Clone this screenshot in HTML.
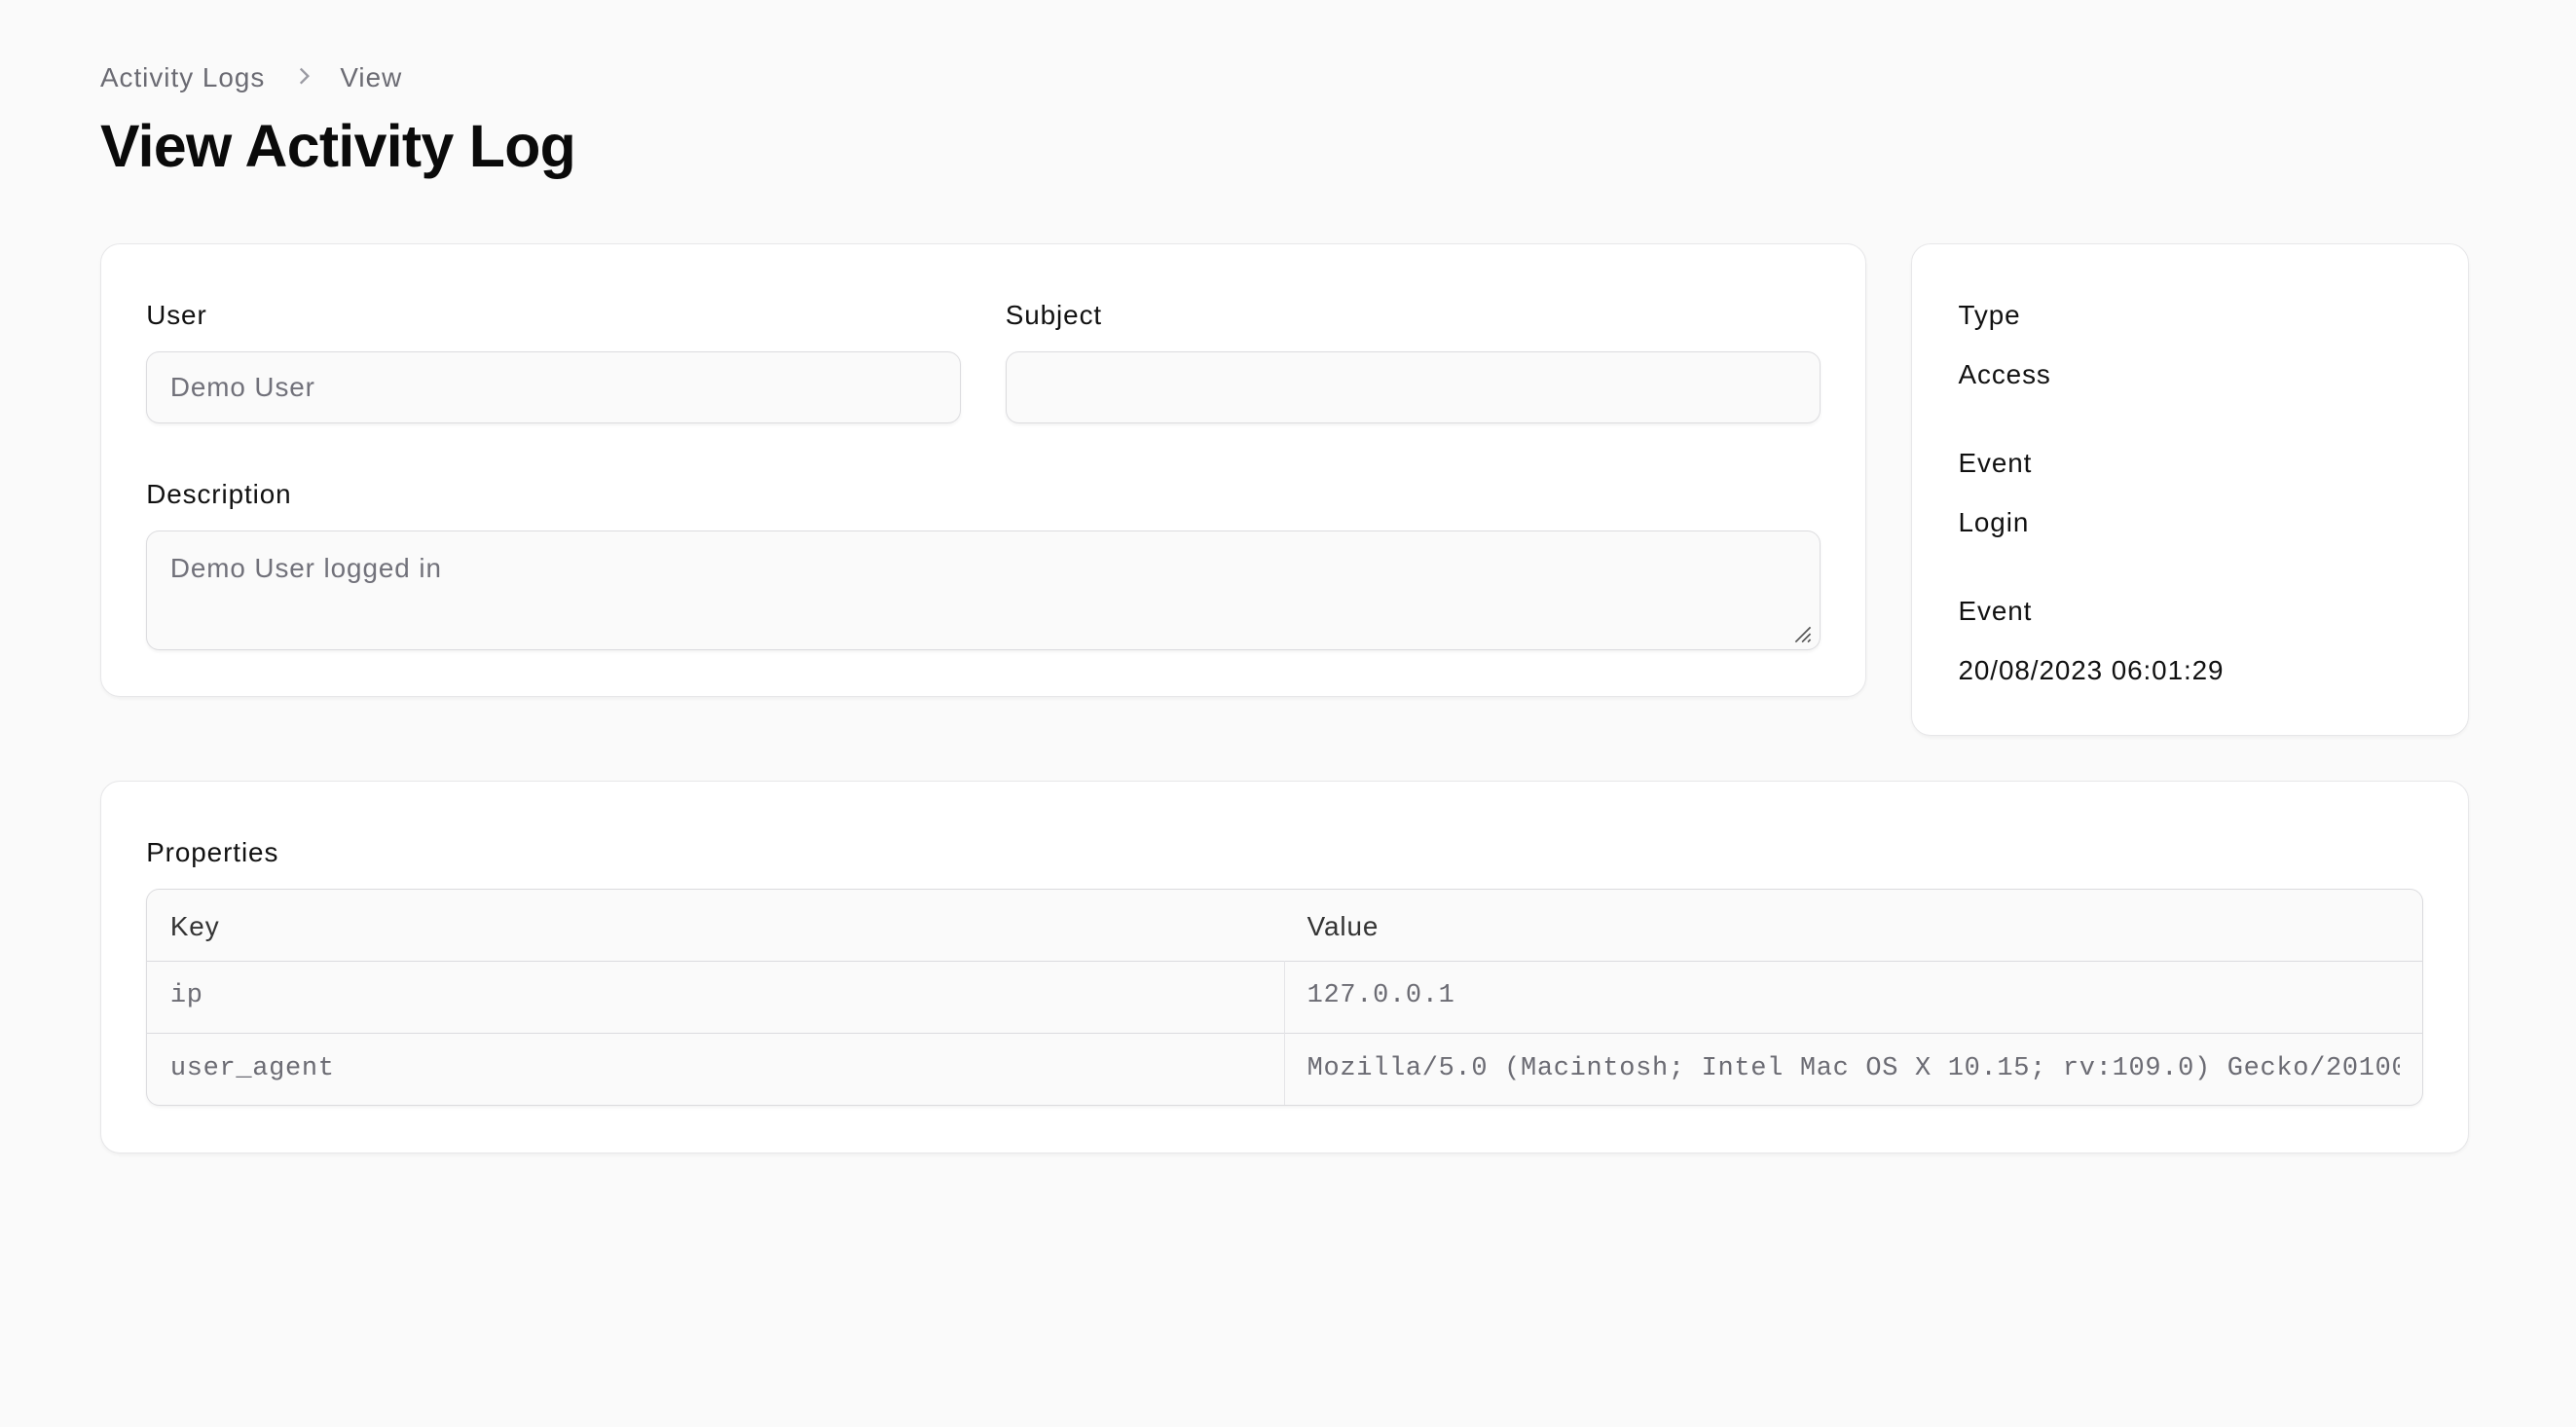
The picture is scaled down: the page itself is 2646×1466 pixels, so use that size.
<!DOCTYPE html>
<html><head><meta charset="utf-8"><style>
html{zoom:1.6875}
*{box-sizing:border-box;margin:0;padding:0}
body{width:1568px;height:869px;background:#fafafa;font-family:"Liberation Sans",sans-serif;color:#111;position:relative;overflow:hidden}
.abs{position:absolute}
.card{position:absolute;background:#fff;border:1px solid #e7e7e9;border-radius:12px;box-shadow:0 1px 2px rgba(0,0,0,.04)}
.lbl{position:absolute;font-size:16.5px;color:#111;line-height:22px;letter-spacing:0.55px}
.inp{position:absolute;background:#fafafa;border:1px solid #dcdcdf;border-radius:8px;font-size:16.5px;letter-spacing:0.55px;color:#71717a;padding:0 14px;box-shadow:0 1px 2px rgba(0,0,0,.05)}
.mono{font-family:"Liberation Mono",monospace;font-size:16px;letter-spacing:0.4px;color:#6b6b73}
</style></head><body>
<div class="abs" style="left:61px;top:36px;font-size:16.5px;letter-spacing:0.6px;color:#6b6b73;line-height:22px">Activity Logs</div>
<svg class="abs" style="left:179px;top:40px" width="12" height="12" viewBox="0 0 12 12"><path d="M4 1.5 L8.5 6 L4 10.5" fill="none" stroke="#9a9aa2" stroke-width="1.4"/></svg>
<div class="abs" style="left:207px;top:36px;font-size:16.5px;letter-spacing:0.6px;color:#6b6b73;line-height:22px">View</div>
<div class="abs" style="left:61px;top:67px;font-size:36px;font-weight:bold;line-height:44px;letter-spacing:-0.4px;color:#0a0a0a">View Activity Log</div>

<div class="card" style="left:61px;top:148px;width:1075px;height:276px"></div>
<div class="lbl" style="left:89px;top:181px">User</div>
<div class="inp" style="left:89px;top:214px;width:496px;height:44px;line-height:43px">Demo User</div>
<div class="lbl" style="left:612px;top:181px">Subject</div>
<div class="inp" style="left:612px;top:214px;width:496px;height:44px"></div>
<div class="lbl" style="left:89px;top:290px">Description</div>
<div class="inp" style="left:89px;top:323px;width:1019px;height:73px;padding-top:11px;line-height:22px">Demo User logged in</div>
<svg class="abs" style="left:1091px;top:380px" width="12" height="12" viewBox="0 0 12 12"><path d="M11 2 L2 11 M11 6 L6 11 M11 9.5 L9.5 11" stroke="#555" stroke-width="1"/></svg>

<div class="card" style="left:1163px;top:148px;width:340px;height:300px"></div>
<div class="lbl" style="left:1192px;top:181px">Type</div>
<div class="lbl" style="left:1192px;top:217px">Access</div>
<div class="lbl" style="left:1192px;top:271px">Event</div>
<div class="lbl" style="left:1192px;top:307px">Login</div>
<div class="lbl" style="left:1192px;top:361px">Event</div>
<div class="lbl" style="left:1192px;top:397px">20/08/2023 06:01:29</div>

<div class="card" style="left:61px;top:475px;width:1442px;height:227px"></div>
<div class="lbl" style="left:89px;top:508px">Properties</div>
<div class="abs" style="left:89px;top:541px;width:1386px;height:132px;border:1px solid #dcdcdf;border-radius:8px;background:#fafafa;overflow:hidden;box-shadow:0 1px 2px rgba(0,0,0,.05)">
 <div class="abs" style="left:0;top:43px;width:100%;border-top:1px solid #dcdcdf"></div>
 <div class="abs" style="left:0;top:87px;width:100%;border-top:1px solid #dcdcdf"></div>
 <div class="abs" style="left:692px;top:43px;height:90px;border-left:1px solid #e4e4e7"></div>
 <div class="lbl" style="left:14px;top:11px;color:#333">Key</div>
 <div class="lbl" style="left:706px;top:11px;color:#333">Value</div>
 <div class="abs mono" style="left:14px;top:56px">ip</div>
 <div class="abs mono" style="left:706px;top:56px">127.0.0.1</div>
 <div class="abs mono" style="left:14px;top:100px">user_agent</div>
 <div class="abs mono" style="left:706px;top:100px;width:665px;overflow:hidden;white-space:nowrap">Mozilla/5.0 (Macintosh; Intel Mac OS X 10.15; rv:109.0) Gecko/20100101 Firefox/116.0</div>
</div>
</body></html>
